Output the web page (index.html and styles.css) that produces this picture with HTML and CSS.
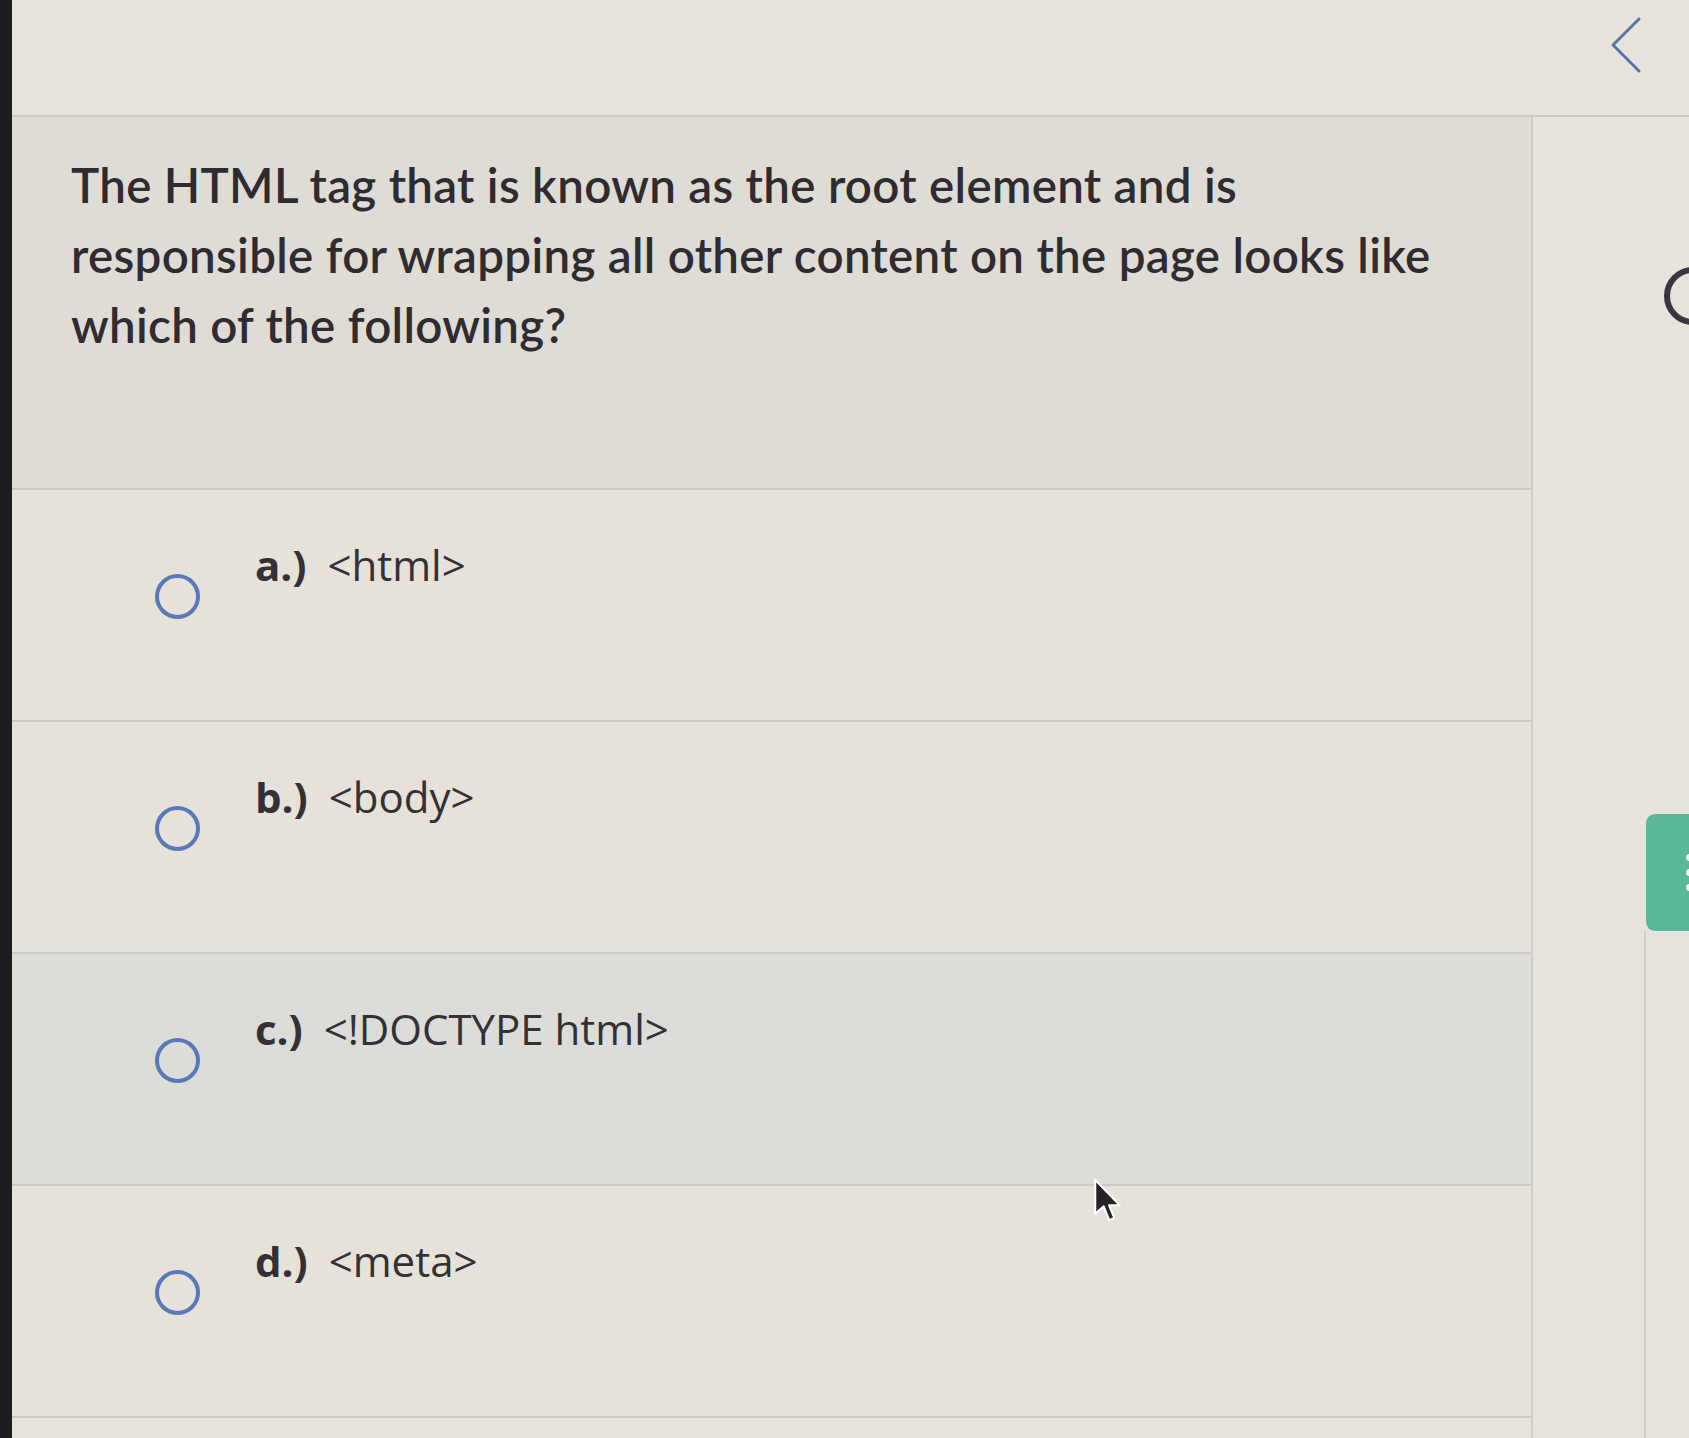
FILE: index.html
```html
<!DOCTYPE html>
<html lang="en">
<head>
    <meta charset="UTF-8">
    <meta name="viewport" content="width=device-width, initial-scale=1.0">
    <title>Question</title>
    <link rel="stylesheet" href="styles.css">
</head>
<body>
    <div class="screen">
        <div class="topbar">
            <a href="javascript:;" class="back">
                <svg width="34" height="58" viewBox="0 0 34 58"><path d="M30 3 L4 29 L30 55" fill="none" stroke="#5b72a9" stroke-width="3" stroke-linecap="round" stroke-linejoin="round"/></svg>
            </a>
        </div>
        <div class="main">
            <div class="content">
                <div class="question">
                    <p>The HTML tag that is known as the root element and is responsible for wrapping all other content on the page looks like which of the following?</p>
                </div>
                <ul class="options">
                    <li class="option">
                        <span class="radio"></span>
                        <span class="label"><b>a.)</b> &lt;html&gt;</span>
                    </li>
                    <li class="option">
                        <span class="radio"></span>
                        <span class="label"><b>b.)</b> &lt;body&gt;</span>
                    </li>
                    <li class="option hover">
                        <span class="radio"></span>
                        <span class="label"><b>c.)</b> &lt;!DOCTYPE html&gt;</span>
                    </li>
                    <li class="option">
                        <span class="radio"></span>
                        <span class="label"><b>d.)</b> &lt;meta&gt;</span>
                    </li>
                </ul>
                <svg class="cursor" width="32" height="48" viewBox="0 0 30 44"><path d="M3 2 L3 34 L11 27 L16 40 L21 38 L16 26 L26 26 Z" fill="#25222a" stroke="#fff" stroke-width="2" stroke-linejoin="round"/></svg>
            </div>
            <div class="rail">
                <span class="ring"></span>
                <div class="tab">
                    <i></i><i></i><i></i>
                </div>
                <div class="rail-line"></div>
            </div>
        </div>
    </div>
</body>
</html>
```

FILE: styles.css
```css
*{
    margin: 0;
    padding: 0;
    box-sizing: border-box;
}
ul{
    list-style: none;
}
html,body{
    height: 100%;
    overflow: hidden;
}
body{
    background-color: #e7e3dc;
    color: #2d2a2f;
}
.screen{
    height: 100%;
    border-left: 12px solid #1c1b20;
    display: flex;
    flex-direction: column;
}
.topbar{
    height: 117px;
    flex-shrink: 0;
    border-bottom: 2px solid #cdc9c1;
    display: flex;
    justify-content: flex-end;
    padding: 16px 46px 0 0;
}
.topbar .back{
    display: block;
    width: 34px;
    height: 58px;
}
.main{
    flex: 1;
    display: flex;
}
.content{
    width: 1521px;
    flex-shrink: 0;
    border-right: 2px solid #d0ccc4;
    position: relative;
}
.question{
    height: 373px;
    background-color: #dfdcd5;
    border-bottom: 2px solid #cbc7bf;
    padding: 33px 0 0 59px;
}
.question p{
    max-width: 1400px;
    font-family: Lato, "Liberation Sans", sans-serif;
    font-weight: 600;
    font-size: 47.5px;
    letter-spacing: 0.3px;
    line-height: 70px;
    color: #2e2b31;
}
.option{
    height: 232px;
    border-bottom: 2px solid #cdc9c1;
    background-color: #e6e2da;
    display: flex;
    align-items: flex-start;
    padding-left: 143px;
}
.option.hover{
    background-color: #dcdcd8;
}
.option .radio{
    width: 45px;
    height: 45px;
    margin-top: 84px;
    border: 4px solid #5a79b8;
    border-radius: 50%;
    flex-shrink: 0;
}
.option .label{
    margin: 50px 0 0 55px;
    font-family: "Open Sans", "Liberation Sans", sans-serif;
    font-size: 42px;
    line-height: 50px;
    color: #333036;
}
.option .label b{
    font-weight: 700;
    margin-right: 10px;
}
.cursor{
    position: absolute;
    left: 1080px;
    top: 1060px;
}
.rail{
    flex: 1;
    position: relative;
    overflow: hidden;
}
.rail .ring{
    position: absolute;
    left: 131px;
    top: 150px;
    width: 58px;
    height: 58px;
    border: 6px solid #3a3540;
    border-radius: 50%;
}
.rail .tab{
    position: absolute;
    left: 113px;
    top: 697px;
    width: 50px;
    height: 117px;
    background-color: #5bb79a;
    border-radius: 9px 0 0 9px;
    display: flex;
    flex-direction: column;
    justify-content: center;
    gap: 8px;
    padding-left: 40px;
}
.rail .tab i{
    display: block;
    width: 7px;
    height: 7px;
    border-radius: 50%;
    background-color: #eef5f1;
}
.rail .rail-line{
    position: absolute;
    left: 111px;
    top: 814px;
    bottom: 0;
    border-left: 2px solid #d0ccc4;
}
```
